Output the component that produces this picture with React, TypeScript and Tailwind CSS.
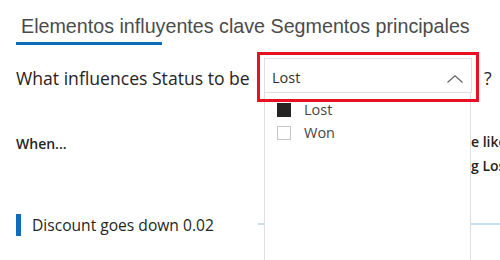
import React from "react";

const seg = "font-['Segoe_UI','Open_Sans',sans-serif]";

function Chevron() {
  return (
    <svg width="16" height="8" viewBox="0 0 16 8" className="block">
      <polyline points="0.5,7.5 8,0.8 15.5,7.5" fill="none" stroke="#605e5c" strokeWidth="1.1" />
    </svg>
  );
}

export default function App() {
  return (
    <div className={`relative w-[500px] h-[260px] overflow-hidden bg-white text-[#252423] ${seg}`}>
      {/* tabs */}
      <div className="pt-[14px] pl-[21px] whitespace-nowrap text-[19.7px] leading-[24px] text-[#4b4b4b] font-['Liberation_Sans',Arial,sans-serif]">
        Elementos influyentes clave Segmentos principales
      </div>
      <div className="ml-[16px] mt-[4px] w-[146px] h-[3px] bg-[#0f6cbd]" />

      {/* question row */}
      <div className="mt-[7px] flex items-center pl-[16px] h-[50px]">
        <span className="w-[241px] shrink-0 whitespace-nowrap text-[17.6px] leading-[22px] pt-[2px]">
          What influences Status to be
        </span>
        <div className="relative z-20 shrink-0 w-[222px] h-[50px] border-[3px] border-[#e81123] pt-[3px] pl-[4px] pr-[4px]">
          <div className="h-[35px] border border-[#e1dfdd] bg-white flex items-center justify-between pl-[7px] pr-[8px]">
            <span className="text-[14.5px] text-[#323130] pt-[4px]">Lost</span>
            <span className="pt-[6px]"><Chevron /></span>
          </div>
        </div>
        <span className="ml-[5px] text-[17.6px] leading-[22px] pt-[2px]">?</span>
      </div>

      {/* open list overlay */}
      <div className="absolute left-[264px] top-[93px] w-[207px] bottom-0 z-10 bg-white border-x border-[#e1dfdd] pt-[5px] pl-[12px]">
        <div className="flex items-center h-[23px] gap-[13px]">
          <span className="w-[14px] h-[14px] bg-[#252423]" />
          <span className="text-[14.5px] text-[#484644]">Lost</span>
        </div>
        <div className="flex items-center h-[23px] gap-[13px]">
          <span className="w-[14px] h-[14px] border border-[#c8c6c4] bg-white" />
          <span className="text-[14.5px] text-[#484644]">Won</span>
        </div>
      </div>

      {/* when row */}
      <div className="mt-[28px] flex pl-[16px]">
        <div className="w-[284px] shrink-0 text-[14px] font-semibold leading-[23px] pt-[2px]">When...</div>
        <div className="shrink-0 text-[14px] font-semibold leading-[24px] whitespace-nowrap">
          <div className="flex">
            <span className="w-[171px] text-right">....th</span>
            <span>e likelihood of</span>
          </div>
          <div className="flex">
            <span className="w-[171px] text-right">Status bein</span>
            <span>g Lost increases by</span>
          </div>
        </div>
      </div>

      {/* discount row */}
      <div className="mt-[36px] flex items-center pl-[16px] relative">
        <div className="w-[5px] h-[22px] bg-[#0f6cbd]" />
        <span className="ml-[11px] text-[15.6px] leading-[22px]">Discount goes down 0.02</span>
        <div className="absolute left-[258px] right-0 top-[9px] h-[2px] bg-[#c7e0f4]" />
      </div>
    </div>
  );
}
